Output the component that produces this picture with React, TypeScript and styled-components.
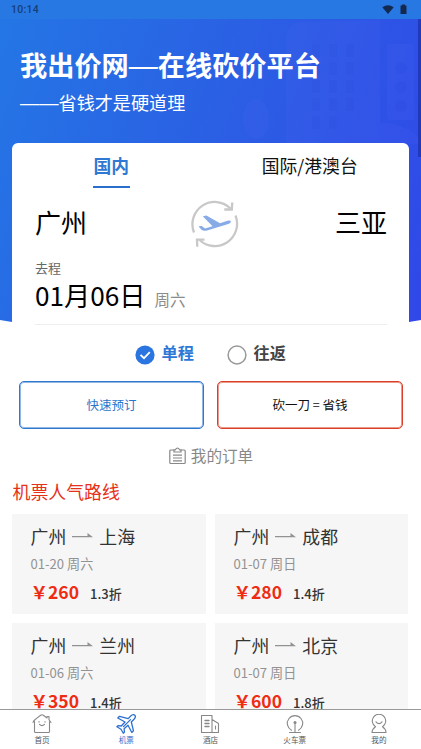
import React from 'react';
import styled, { createGlobalStyle } from 'styled-components';

const GlobalStyle = createGlobalStyle`
  * { box-sizing: border-box; }
  body {
    margin: 0;
    background: #fff;
    font-family: "Noto Sans CJK SC", sans-serif;
    color: #111;
    overflow: hidden;
  }
`;

const Screen = styled.div`
  position: relative;
  width: 421px;
  height: 749px;
  overflow: hidden;
  display: flex;
  flex-direction: column;
`;

const StatusBar = styled.header`
  flex: none;
  height: 19px;
  padding: 0 10px 0 11px;
  display: flex;
  align-items: center;
  justify-content: space-between;
  background: #2878e3;
  color: #163f78;
  font: 500 10.5px/18px Roboto, sans-serif;
  letter-spacing: 0.3px;
`;

const Content = styled.main`
  flex: 1;
  min-height: 0;
  overflow: hidden;
`;

const Hero = styled.section`
  position: relative;
  height: 325px;
  padding: 28px 20px 0;
  color: #fff;
  background: linear-gradient(110deg, #2476e5 0%, #2b5fe4 48%, #3047e8 100%);
  clip-path: polygon(0 0, 100% 0, 100% 301px, 409px 303px, 395px 305px, 26px 305px, 12px 303px, 0 301px);
`;

const Skyline = styled.svg`
  position: absolute;
  left: 0;
  top: 0;
`;

const Title = styled.h1`
  position: relative;
  margin: 0;
  font-size: 27.2px;
  font-weight: 700;
  line-height: 34px;
  white-space: nowrap;
`;

const Subtitle = styled.p`
  position: relative;
  margin: 8px 0 0;
  font-size: 18.1px;
  line-height: 26px;
`;

const Dash = styled.span<{ $size: number }>`
  font-family: "Liberation Sans", sans-serif;
  font-size: ${p => p.$size}px;
  font-weight: 400;
  line-height: 1;
`;

const Booking = styled.section`
  position: relative;
  width: 397px;
  height: 232px;
  margin: -201px 0 0 12px;
  padding: 0 22px 0 23px;
  background: #fff;
  border-radius: 6px 6px 0 0;
`;

const Tabs = styled.nav`
  display: grid;
  grid-template-columns: 1fr 1fr;
  justify-items: center;
  margin: 0 -22px 0 -23px;
`;

const Tab = styled.div<{ $active?: boolean }>`
  height: 45px;
  padding: 9px 0.5px 0;
  font-size: 17.8px;
  line-height: 26px;
  font-weight: ${p => (p.$active ? 700 : 400)};
  color: ${p => (p.$active ? '#2f78d4' : '#111')};
  border-bottom: 2px solid ${p => (p.$active ? '#2b6fcc' : 'transparent')};
`;

const Cities = styled.div`
  height: 70px;
  padding-top: 12px;
  display: flex;
  justify-content: space-between;
  align-items: flex-start;
  svg { margin-left: 8px; }
`;

const City = styled.span`
  font-size: 26px;
  line-height: 43px;
  color: #000;
`;

const Caption = styled.div`
  margin-top: 1px;
  font-size: 13px;
  line-height: 18px;
  color: #666;
`;

const DateRow = styled.div`
  height: 48px;
  display: flex;
  align-items: baseline;
  gap: 9px;
  border-bottom: 1px solid #eee;
`;

const DateText = styled.span`
  font-size: 26.2px;
  line-height: 37px;
  color: #000;
`;

const Weekday = styled.span`
  font-size: 15.5px;
  color: #8c8c8c;
`;

const TripTypes = styled.div`
  height: 50px;
  padding: 10px 0 0 100px;
  display: flex;
  align-items: flex-start;
  gap: 33px;
`;

const TripType = styled.div<{ $active?: boolean }>`
  display: flex;
  align-items: center;
  gap: 6.5px;
  height: 40px;
  width: 59px;
  font-size: 16.2px;
  font-weight: 700;
  line-height: 24px;
  white-space: nowrap;
  color: ${p => (p.$active ? '#2d78d6' : '#444')};
  svg { flex: none; }
  span { margin-top: -6px; }
`;

const Actions = styled.div`
  display: grid;
  grid-template-columns: 185px 186px;
  gap: 13px;
  margin: 6px 0 0 19px;
`;

const ActionButton = styled.button<{ $tone: string; $color: string }>`
  height: 48px;
  padding: 0 0 1px;
  border: 1px solid ${p => p.$tone};
  box-shadow: inset 0 0 0 1px ${p => p.$tone}88;
  border-radius: 5px;
  background: #fff;
  color: ${p => p.$color};
  font: 400 12.5px/20px "Noto Sans CJK SC", sans-serif;
`;

const Orders = styled.div`
  height: 54px;
  padding-left: 1px;
  display: flex;
  align-items: center;
  justify-content: center;
  gap: 5px;
  font-size: 15.6px;
  line-height: 24px;
  color: #888;
  span { margin-top: -2px; }
`;

const Heading = styled.h2`
  margin: -6px 0 0 12.5px;
  height: 37px;
  font-size: 17.9px;
  font-weight: 400;
  line-height: 28px;
  color: #e6301a;
`;

const Routes = styled.div`
  display: grid;
  grid-template-columns: 194px 193px;
  gap: 9px;
  margin-left: 12px;
`;

const RouteCard = styled.article`
  height: 100px;
  padding: 9px 0 0 18.5px;
  background: #f6f6f6;
`;

const RouteTitle = styled.div`
  display: flex;
  align-items: center;
  gap: 5.5px;
  font-size: 17.9px;
  line-height: 26px;
  color: #333;
  svg { margin-right: 1px; }
`;

const RouteDate = styled.div`
  margin-top: 5px;
  font-size: 13.1px;
  line-height: 20px;
  color: #929292;
`;

const PriceRow = styled.div`
  display: flex;
  align-items: baseline;
  gap: 11px;
  margin-top: 3.5px;
  line-height: 28px;
`;

const Price = styled.span`
  font-size: 17.5px;
  font-weight: 700;
  color: #ef2c12;
`;

const Discount = styled.span`
  font-size: 13px;
  font-weight: 500;
  color: #333;
`;

const BottomNav = styled.nav`
  flex: none;
  height: 40px;
  display: grid;
  grid-template-columns: repeat(5, 1fr);
  background: #fff;
  border-top: 1px solid #999;
`;

const NavItem = styled.div<{ $active?: boolean }>`
  display: flex;
  flex-direction: column;
  align-items: center;
  padding-top: 4px;
  font-size: 7.6px;
  line-height: 12px;
  color: ${p => (p.$active ? '#2b70d0' : '#555')};
  svg { color: ${p => (p.$active ? '#2b70d0' : '#888')}; }
`;

const ScrollThumb = styled.div`
  position: absolute;
  top: 19px;
  right: 0;
  width: 3px;
  height: 138px;
  background: rgba(20, 30, 130, 0.45);
`;

const routes = [
  { to: '上海', date: '01-20 周六', price: 260, discount: '1.3折' },
  { to: '成都', date: '01-07 周日', price: 280, discount: '1.4折' },
  { to: '兰州', date: '01-06 周六', price: 350, discount: '1.4折' },
  { to: '北京', date: '01-07 周日', price: 600, discount: '1.8折' },
];

const NavSvg = ({ children }: { children: React.ReactNode }) => (
  <svg width="20" height="20" viewBox="0 0 20 20" fill="none" stroke="currentColor" strokeWidth="1.100" strokeLinecap="round" strokeLinejoin="round">
    {children}
  </svg>
);

const navItems = [
  {
    label: '首页',
    icon: (
      <>
        <path d="M1 8.5C1.3 6.5 3 6 4.200 4.600L8.700 1.200Q10 .4 11.300 1.200L15 4V2.500H17V5.700L19 8.500M2.500 7.500V17.500Q2.500 18.500 3.500 18.500H16.500Q17.500 18.500 17.500 17.500V7.500" />
        <path d="M7 7.500v.6M13 7.500v.6M7.500 10.300Q10 12.900 12.500 10.300" />
      </>
    ),
  },
  {
    label: '机票',
    active: true,
    icon: (
      <path strokeWidth="1.300" d="M18.800 1.200C17.500.2 15.700 1 14.500 2.200L12.200 4.600 3.500 2.300 1.800 4 9 8 5.300 12 2 11.600.9 12.800 5 15.200 7.300 19.200 8.500 18 8.100 14.800 12 11.200 15.800 18.500 17.500 16.800 15.300 8 17.800 5.500C19 4.300 19.700 2.300 18.800 1.200ZM7.500 12.600 14.500 5.600" />
    ),
  },
  {
    label: '酒店',
    icon: (
      <>
        <path d="M12 18.500H1.500V1.500H12V18.500H18.500V9.500L12 5.500M15.500 12v3" />
        <path strokeWidth="1.400" d="M5 6.500h4M5 9.500h4M5 12.500h4" />
      </>
    ),
  },
  {
    label: '火车票',
    icon: (
      <>
        <path d="M6.500 16.200A7.700 7.700 0 1 1 13.500 16.200" />
        <path d="M10 9V18.500M4.500 18.500H15.500" />
        <circle cx="10" cy="8.500" r="1.500" fill="currentColor" stroke="none" />
      </>
    ),
  },
  {
    label: '我的',
    icon: (
      <>
        <path d="M6.500 12.700A6.700 6.700 0 1 1 13.500 12.700Q16.800 14.800 17 18.500H3Q3.200 14.800 6.500 12.700" />
        <path d="M7 7.800Q10 11.500 13 7.800" />
      </>
    ),
  },
];

const SwapIcon = () => (
  <svg width="48" height="48" viewBox="0 0 48 48" fill="none">
    <g stroke="#c8c8c8" strokeWidth="2.300">
      <path d="M3 32.500A22.300 22.300 0 0 1 39.500 8.500" />
      <path d="M44.500 15.500A22.300 22.300 0 0 1 8.500 40" />
      <path d="M41.300 2.500 40.800 9.500 33.300 9.500M6.300 46.800 6 39.700 13.500 39.700" />
    </g>
    <path fill="#87abe7" d="M7.500 26.200 10.700 26 14 28.400 21.500 26.200 11.800 16.200 15.400 15.400 29 23.300 36.500 20.700Q39.600 20 39.900 21.600 39.800 23.200 37.300 24.100L16 30.500Q12.500 31.500 10.500 29.800Z" />
  </svg>
);

const RouteArrow = () => (
  <svg width="21" height="10" viewBox="0 0 21 10">
    <path d="M0 6.300H21L15.500 2V4.900H0Z" fill="#929292" />
  </svg>
);

const windows = [260, 277, 294].map((cx, col) => [0, 1, 2, 3, 4].slice(0, col === 2 ? 4 : 5).map(i => (
  <rect key={`${cx}-${i}`} x={cx + 52} y={25 + i * 18} width="8" height="13" rx="1" />
)));

export default function App() {
  return (
    <>
      <GlobalStyle />
      <Screen>
        <StatusBar>
          <span>10:14</span>
          <svg width="30" height="12" viewBox="0 0 30 12" fill="#13294f">
            <path d="M1.300 3.300Q7 -.8 12.700 3.300L7 10Z" />
            <path d="M19.500 1.500H21V.5H24V1.500H25.500V10H19.500Z" />
          </svg>
        </StatusBar>
        <Content>
          <Hero>
            <Skyline width="421" height="325" viewBox="0 0 421 325">
              <g fill="#6b72ff" opacity=".09">
                <path d="M286 125V19Q287 4 302 3L380 1V125Z" />
                <rect x="387" y="25" width="27" height="76" rx="3" />
                <ellipse cx="256" cy="100" rx="13" ry="20" />
                <path d="M347 125Q352 109 370 109Q384 99 404 109Q416 111 421 125Z" />
              </g>
              <g fill="#2040d0" opacity=".1">
                {windows}
                <circle cx="401" cy="49" r="6" />
                <circle cx="401" cy="68" r="6" />
                <circle cx="401" cy="87" r="6" />
              </g>
            </Skyline>
            <Title>我出价网<Dash $size={29}>—</Dash>在线砍价平台</Title>
            <Subtitle><Dash $size={19.300}>——</Dash>省钱才是硬道理</Subtitle>
          </Hero>
          <Booking>
            <Tabs>
              <Tab $active>国内</Tab>
              <Tab>国际/港澳台</Tab>
            </Tabs>
            <Cities>
              <City>广州</City>
              <SwapIcon />
              <City>三亚</City>
            </Cities>
            <Caption>去程</Caption>
            <DateRow>
              <DateText>01月06日</DateText>
              <Weekday>周六</Weekday>
            </DateRow>
            <TripTypes>
              <TripType $active>
                <svg width="20" height="20" viewBox="0 0 20 20" fill="none">
                  <circle cx="10" cy="10" r="9.600" fill="#2a75e0" />
                  <path d="M5.500 9.800 9 13.200 14.800 7.200" stroke="#fff" strokeWidth="1.800" />
                </svg>
                <span>单程</span>
              </TripType>
              <TripType>
                <svg width="20" height="20" viewBox="0 0 20 20" fill="none">
                  <circle cx="10" cy="10" r="8.900" stroke="#999" strokeWidth="1.500" />
                </svg>
                <span>往返</span>
              </TripType>
            </TripTypes>
          </Booking>
          <Actions>
            <ActionButton $tone="#2f78ce" $color="#2b76cc">快速预订</ActionButton>
            <ActionButton $tone="#db3e26" $color="#111">砍一刀 = 省钱</ActionButton>
          </Actions>
          <Orders>
            <svg width="17" height="18" viewBox="0 0 17 18" fill="none" stroke="#888" strokeWidth="1.200">
              <path d="M5 3H1.800Q.8 3 .8 4V15.500Q.8 16.500 1.800 16.500H15.200Q16.200 16.500 16.200 15.500V4Q16.200 3 15.200 3H12" />
              <path d="M5 5V2.800H6.300Q8.500 -.8 10.700 2.800H12V5ZM4 8.200H13M4 11H13M4 13.800H13" />
            </svg>
            <span>我的订单</span>
          </Orders>
          <Heading>机票人气路线</Heading>
          <Routes>
            {routes.map(r => (
              <RouteCard key={r.to}>
                <RouteTitle>
                  <span>广州</span>
                  <RouteArrow />
                  <span>{r.to}</span>
                </RouteTitle>
                <RouteDate>{r.date}</RouteDate>
                <PriceRow>
                  <Price>￥{r.price}</Price>
                  <Discount>{r.discount}</Discount>
                </PriceRow>
              </RouteCard>
            ))}
          </Routes>
        </Content>
        <BottomNav>
          {navItems.map(n => (
            <NavItem key={n.label} $active={n.active}>
              <NavSvg>{n.icon}</NavSvg>
              <span>{n.label}</span>
            </NavItem>
          ))}
        </BottomNav>
        <ScrollThumb />
      </Screen>
    </>
  );
}
